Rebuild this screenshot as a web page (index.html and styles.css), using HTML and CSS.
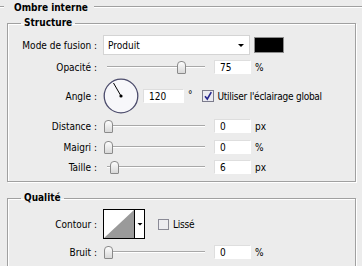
FILE: index.html
```html
<!DOCTYPE html>
<html lang="fr">
<head>
<meta charset="UTF-8">
<title>Ombre interne</title>
<link rel="stylesheet" href="styles.css">
</head>
<body>
<div class="panel">
  <div class="title">Ombre interne</div>

  <fieldset class="group structure">
    <legend>Structure</legend>

    <div class="row row-mode">
      <span class="lbl">Mode de fusion :</span>
      <div class="select"><span>Produit</span><span class="caret"></span></div>
      <div class="swatch"></div>
    </div>

    <div class="row row-opacity">
      <span class="lbl">Opacité :</span>
      <div class="slider"><span class="thumb" style="left: 74px"></span></div>
      <input class="num" type="text" value="75">
      <span class="unit">%</span>
    </div>

    <div class="row row-angle">
      <span class="lbl">Angle :</span>
      <svg class="dial" width="36" height="36" viewBox="0 0 36 36">
        <circle cx="18" cy="18" r="16.8" fill="#f7f7fa" stroke="#4c4c6c" stroke-width="1.3"/>
        <line x1="18" y1="18" x2="10.5" y2="5" stroke="#000" stroke-width="1"/>
        <circle cx="18" cy="18" r="1.6" fill="#000"/>
      </svg>
      <input class="num wide" type="text" value="120">
      <span class="deg">°</span>
      <svg class="check" width="12" height="12" viewBox="0 0 12 12">
        <rect x="0.5" y="0.5" width="11" height="11" fill="#eaeaf0" stroke="#7c7c8c"/>
        <path d="M3 6.2 L5.3 9 L9.3 2.2" fill="none" stroke="#26268e" stroke-width="1.6"/>
      </svg>
      <span class="check-text">Utiliser l'éclairage global</span>
    </div>

    <div class="row row-distance">
      <span class="lbl">Distance :</span>
      <div class="slider"><span class="thumb" style="left: 1px"></span></div>
      <input class="num" type="text" value="0">
      <span class="unit">px</span>
    </div>

    <div class="row row-choke">
      <span class="lbl">Maigri :</span>
      <div class="slider"><span class="thumb" style="left: 1px"></span></div>
      <input class="num" type="text" value="0">
      <span class="unit">%</span>
    </div>

    <div class="row row-size">
      <span class="lbl">Taille :</span>
      <div class="slider"><span class="thumb" style="left: 7px"></span></div>
      <input class="num" type="text" value="6">
      <span class="unit">px</span>
    </div>
  </fieldset>

  <fieldset class="group quality">
    <legend>Qualité</legend>

    <div class="row row-contour">
      <span class="lbl">Contour :</span>
      <svg class="contour" width="42" height="30" viewBox="0 0 42 30">
        <rect x="0.5" y="0.5" width="41" height="29" fill="#fff" stroke="#000"/>
        <polygon points="1,29 31,1 31,29" fill="#9a9a9a"/>
        <line x1="31.5" y1="0.5" x2="31.5" y2="29.5" stroke="#000"/>
        <polygon points="34.5,14 39.5,14 37,16.5" fill="#000"/>
      </svg>
      <svg class="check empty" width="11" height="11" viewBox="0 0 11 11">
        <rect x="0.5" y="0.5" width="10" height="10" fill="#ececf0" stroke="#8a8a96"/>
      </svg>
      <span class="check-text">Lissé</span>
    </div>

    <div class="row row-noise">
      <span class="lbl">Bruit :</span>
      <div class="slider"><span class="thumb" style="left: 1px"></span></div>
      <input class="num" type="text" value="0">
      <span class="unit">%</span>
    </div>
  </fieldset>
</div>
</body>
</html>
```

FILE: styles.css
```css
body {
  margin: 0;
  background-color: #ececec;
  font-family: "DejaVu Sans Condensed", "DejaVu Sans", sans-serif;
  font-size: 10px;
  color: #000;
}

.panel {
  width: 362px;
  height: 266px;
  overflow: hidden;
}

.title {
  display: flex;
  align-items: center;
  height: 14px;
  font-weight: bold;
}

.title::before,
.title::after {
  content: "";
  border-top: 1px solid #a0a0a0;
  border-bottom: 1px solid #fff;
}

.title::before {
  width: 4px;
  margin-right: 10px;
}

.title::after {
  flex: 1;
  margin-left: 6px;
}

.group {
  margin: 3px 6px 0 7px;
  padding: 0 0 6px;
  border: 1px solid #a0a0a0;
  box-shadow: inset 1px 1px 0 #fff, 1px 1px 0 #fff;
  min-width: 0;
}

.quality {
  margin-top: 10px;
}

legend {
  margin-left: 13px;
  padding: 0 3px;
  font-weight: bold;
  line-height: 12px;
}

.row {
  display: flex;
  align-items: center;
}

.lbl {
  flex: none;
  width: 89px;
  margin-right: 6px;
  text-align: right;
}

.row-mode { height: 20px; margin-top: 6px; }
.row-opacity { height: 18px; margin-top: 3px; }
.row-angle { height: 34px; margin-top: 3px; }
.row-distance { height: 16px; margin-top: 5px; }
.row-choke { height: 16px; margin-top: 5px; }
.row-size { height: 16px; margin-top: 4px; }
.row-contour { height: 30px; margin-top: 5px; }
.row-noise { height: 16px; margin-top: 5px; }

.select {
  display: flex;
  align-items: center;
  box-sizing: border-box;
  width: 147px;
  height: 20px;
  padding-left: 4px;
  background-color: #fff;
  border: 1px solid #d4d4d4;
}

.caret {
  margin-left: auto;
  margin-right: 5px;
  border-left: 3px solid transparent;
  border-right: 3px solid transparent;
  border-top: 3px solid #000;
}

.swatch {
  box-sizing: border-box;
  width: 30px;
  height: 16px;
  margin-left: 4px;
  background-color: #000;
  border: 1px solid #8c8c8c;
}

.slider {
  position: relative;
  flex: none;
  width: 107px;
  height: 16px;
  margin-right: 4px;
}

.slider::before {
  content: "";
  position: absolute;
  left: 4px;
  right: 5px;
  top: 7px;
  border-top: 1px solid #a8a8a8;
  border-bottom: 1px solid #fff;
}

.thumb {
  position: absolute;
  top: 2px;
  width: 7px;
  height: 11px;
  background: linear-gradient(#fdfdfd, #d8d8d8);
  border: 1px solid #8a8a8a;
  border-radius: 4px 4px 1px 1px;
}

.num {
  box-sizing: border-box;
  width: 37px;
  height: 14px;
  margin: 0;
  padding: 0 0 0 5px;
  font: inherit;
  color: #000;
  background-color: #fff;
  border: 1px solid;
  border-color: #dedede #fff #fff #dedede;
  outline: none;
}

.num.wide {
  width: 41px;
  margin-left: 4px;
}

.unit {
  margin-left: 4px;
}

.deg {
  margin-left: 4px;
  margin-bottom: 4px;
}

.check {
  margin-left: 9px;
  flex: none;
}

.check.empty {
  margin-left: 13px;
}

.check-text {
  margin-left: 4px;
  letter-spacing: -0.25px;
}

.dial,
.contour {
  flex: none;
}
```
